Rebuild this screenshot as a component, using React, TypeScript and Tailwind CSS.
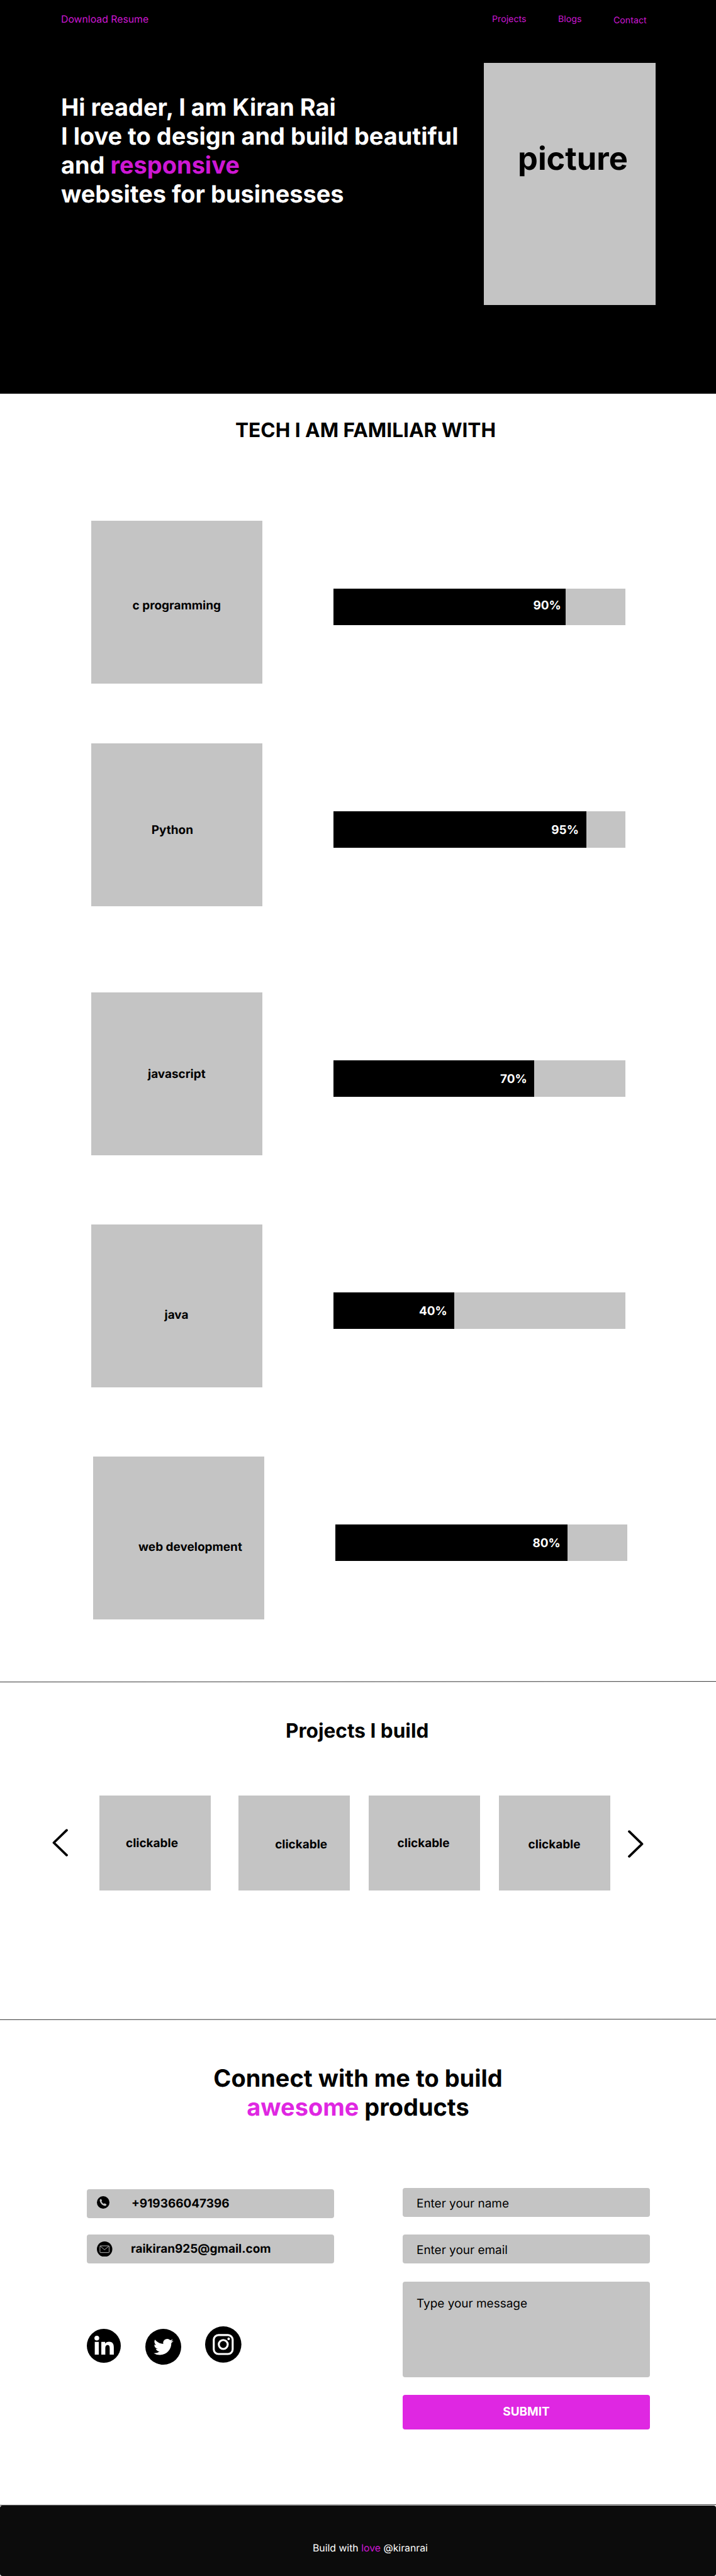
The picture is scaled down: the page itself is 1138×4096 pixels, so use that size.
import React from "react";

const tech = [
  { name: "c programming", row: "mt-0", label: "pl-[65.6px] pt-[123.2px]", value: 90, fill: "w-[369px]", pct: "pr-[7.2px] pt-[14.6px]" },
  { name: "Python", row: "mt-[95px]", label: "pl-[95.8px] pt-[126px]", value: 95, fill: "w-[402px]", pct: "pr-[12px] pt-[17.6px]" },
  { name: "javascript", row: "mt-[137px]", label: "pl-[90px] pt-[118px]", value: 70, fill: "w-[319px]", pct: "pr-[11.2px] pt-[17.6px]" },
  { name: "java", row: "mt-[110px]", label: "pl-[116.5px] pt-[132.4px]", value: 40, fill: "w-[192px]", pct: "pr-[11.2px] pt-[17.6px]" },
  { name: "web development", row: "mt-[110px] ml-[3px]", label: "pl-[72px] pt-[132px]", value: 80, fill: "w-[369px]", pct: "pr-[11.2px] pt-[17.6px]" },
];

const projects = [
  { card: "", label: "pl-[42.4px] pt-[64px]" },
  { card: "ml-[44px]", label: "pl-[58.6px] pt-[66.6px]" },
  { card: "ml-[30px]", label: "pl-[46px] pt-[64px]" },
  { card: "ml-[30px]", label: "pl-[47px] pt-[66.6px]" },
];

function Divider() {
  return (
    <svg className="block h-[2px] w-full" viewBox="0 0 1138 2" preserveAspectRatio="none">
      <line x1="0" y1="1.4" x2="1138" y2="0.6" stroke="black" strokeWidth="0.8" />
    </svg>
  );
}

function Chevron({ right = false }: { right?: boolean }) {
  return (
    <svg className="h-[44px] w-[25px] shrink-0" viewBox="0 0 25 44" fill="none" stroke="black" strokeWidth="3.8" strokeLinecap="round" strokeLinejoin="round">
      <path d={right ? "M2 2.2 22.5 22 2 41.8" : "M23 2.2 2.5 22 23 41.8"} />
    </svg>
  );
}

function LinkedIn() {
  return (
    <svg className="mt-[4px] size-[54px]" viewBox="0 0 68 68">
      <circle cx="34" cy="34" r="34" />
      <g fill="white">
        <circle cx="20" cy="18.6" r="4.800" />
        <path d="M15.900 26.200h8V51.500h-8zM29 26.200h7.600v3.500c1.500-2.500 4.500-4 8-4 7.500 0 9.400 5 9.400 11.500V51.500h-8.200V39.300c0-3.500-.4-6.900-4.200-6.900s-4.600 3.500-4.600 6.900V51.500h-8z" />
      </g>
    </svg>
  );
}

function Twitter() {
  return (
    <svg className="ml-[39px] mt-[4px] size-[57px]" viewBox="0 0 72 72">
      <circle cx="36" cy="36" r="36" />
      <path
        transform="translate(16.600 16.600) scale(1.650)"
        fill="white"
        d="M23.953 4.570a10 10 0 01-2.825.775 4.958 4.958 0 002.163-2.723c-.951.555-2.005.959-3.127 1.184a4.920 4.920 0 00-8.384 4.482C7.690 8.095 4.067 6.130 1.640 3.162a4.822 4.822 0 00-.666 2.475c0 1.710.870 3.213 2.188 4.096a4.904 4.904 0 01-2.228-.616v.060a4.923 4.923 0 003.946 4.827 4.996 4.996 0 01-2.212.085 4.936 4.936 0 004.604 3.417 9.867 9.867 0 01-6.102 2.105c-.390 0-.779-.023-1.170-.067a13.995 13.995 0 007.557 2.209c9.053 0 13.998-7.496 13.998-13.985 0-.210 0-.420-.015-.630A9.935 9.935 0 0024 4.590z"
      />
    </svg>
  );
}

function Instagram() {
  return (
    <svg className="ml-[38.4px] size-[57.7px]" viewBox="0 0 73 73">
      <circle cx="36.500" cy="36.500" r="36.500" />
      <g fill="none" stroke="white" strokeWidth="4">
        <rect x="17.400" y="17.500" width="38" height="38.200" rx="9.500" />
        <circle cx="36.500" cy="36.500" r="9" />
      </g>
      <circle cx="47.400" cy="25.200" r="2.600" fill="white" />
    </svg>
  );
}

function Phone() {
  return (
    <svg className="mt-[11px] size-[20px]" viewBox="0 0 25 25">
      <circle cx="12.500" cy="12.500" r="12.500" />
      <path
        transform="translate(-0.800 -1.100) scale(1.090)"
        d="M6.300 7.300c1.200-1.600 2.200-1.300 2.600-.6l1 2.200c.2.600-.1 1.100-.8 1.900.7 1.700 2.200 3.300 4 4.200.8-.8 1.300-1.100 1.900-.8l2.800 1.500c.8.500.5 1.500-.6 2.500-1.100.9-2.600.8-4.600-.2-3-1.500-5.200-3.900-6.200-6.900-.5-1.700-.6-2.900-.1-3.800z"
        fill="#c4c4c4"
      />
    </svg>
  );
}

function Mail() {
  return (
    <svg className="mt-[10.500px] size-[24.500px]" viewBox="0 0 31 31">
      <circle cx="15.500" cy="15.500" r="15.500" />
      <g fill="none" stroke="#c4c4c4" strokeWidth="1.200" strokeLinejoin="round">
        <rect x="6.200" y="8.900" width="18.400" height="13.500" rx="0.800" />
        <path d="M6.800 9.500l8.600 7.300 8.600-7.300" />
      </g>
    </svg>
  );
}

export default function App() {
  return (
    <div className="flex h-[4096px] w-[1138px] flex-col overflow-hidden bg-white font-['Inter',sans-serif] text-black [font-optical-sizing:none] [text-rendering:geometricPrecision]">
      <header className="h-[626px] shrink-0 bg-black">
        <nav className="flex h-[100px] pl-[97px] text-[#ce17d4]">
          <a className="w-[685px] pt-[21px] text-[15.800px] leading-[19px]">Download Resume</a>
          <a className="w-[105px] pt-[22px] text-[14.200px] leading-[18px]">Projects</a>
          <a className="w-[88px] pt-[22px] text-[14.200px] leading-[18px]">Blogs</a>
          <a className="pt-[23.500px] text-[14.200px] leading-[18px]">Contact</a>
        </nav>
        <div className="flex pl-[97px]">
          <h1 className="w-[672px] pt-[49px] text-[37.930px] font-bold leading-[45.900px] text-white">
            Hi reader, I am Kiran Rai
            <br />
            I love to design and build beautiful
            <br />
            and <span className="text-[#ce17d4]">responsive</span>
            <br />
            websites for businesses
          </h1>
          <div className="h-[385px] w-[273px] bg-[#c4c4c4] pl-[54px] pt-[122px] text-[50.580px] font-bold leading-[61px]">picture</div>
        </div>
      </header>

      <section className="flex h-[2047px] shrink-0 flex-col">
        <h2 className="pl-[374px] pt-[39px] text-[31.600px] font-bold leading-[38px]">TECH I AM FAMILIAR WITH</h2>
        <div className="mt-[125px] pl-[145px]">
          {tech.map((t) => (
            <div key={t.name} className={`flex ${t.row}`}>
              <div className={`h-[259px] w-[272px] bg-[#c4c4c4] text-[18.970px] font-bold leading-[23px] ${t.label}`}>{t.name}</div>
              <div className="ml-[113px] mt-[108px] h-[58px] w-[464px] bg-[#c4c4c4]">
                <div className={`h-full bg-black text-right text-[18.970px] font-bold leading-[23px] text-white ${t.fill} ${t.pct}`}>{t.value}%</div>
              </div>
            </div>
          ))}
        </div>
      </section>

      <section className="h-[537px] shrink-0">
        <Divider />
        <h2 className="pl-[454px] pt-[57.500px] text-[31.600px] font-bold leading-[38px]">Projects I build</h2>
        <div className="mt-[84px] flex pl-[83px]">
          <div className="mt-[53.500px]"><Chevron /></div>
          <div className="ml-[49.600px] flex">
            {projects.map((p, i) => (
              <div key={i} className={`h-[151.700px] w-[177px] bg-[#c4c4c4] text-[18.970px] font-bold leading-[23px] ${p.card} ${p.label}`}>clickable</div>
            ))}
          </div>
          <div className="ml-[28.400px] mt-[55.500px]"><Chevron right /></div>
        </div>
      </section>

      <section className="h-[772px] shrink-0">
        <Divider />
        <h2 className="pt-[71px] text-center text-[37.930px] font-bold leading-[45.900px]">
          Connect with me to build
          <br />
          <span className="text-[#df27e2]">awesome</span> products
        </h2>
        <div className="mt-[104.200px] flex pl-[138px]">
          <div className="w-[393px]">
            <div className="mt-[1.500px] flex h-[46px] rounded-[4px] bg-[#c4c4c4] pl-[16px] text-[18.970px] font-bold leading-[23px]">
              <div className="w-[55px]"><Phone /></div>
              <span className="pt-[11px]">+919366047396</span>
            </div>
            <div className="mt-[26.500px] flex h-[46px] rounded-[4px] bg-[#c4c4c4] pl-[16px] text-[18.970px] font-bold leading-[23px]">
              <div className="w-[54px]"><Mail /></div>
              <span className="pt-[11px]">raikiran925@gmail.com</span>
            </div>
            <div className="mt-[100px] flex">
              <LinkedIn />
              <Twitter />
              <Instagram />
            </div>
          </div>
          <form className="ml-[109px] w-[393px] text-[18.970px] leading-[23px]">
            <div className="h-[46px] rounded-[4px] bg-[#c4c4c4] pl-[22px] pt-[12.600px]">Enter your name</div>
            <div className="mt-[28.200px] h-[46px] rounded-[4px] bg-[#c4c4c4] pl-[22px] pt-[12.600px]">Enter your email</div>
            <div className="mt-[28.400px] h-[152px] rounded-[4px] bg-[#c4c4c4] pl-[22px] pt-[23.300px]">Type your message</div>
            <button type="button" className="mt-[28px] block h-[55.400px] w-full rounded-[4px] bg-[#df27e2] pb-[1px] text-center font-bold text-white">SUBMIT</button>
          </form>
        </div>
      </section>

      <footer className="flex grow flex-col">
        <Divider />
        <div className="grow rounded-[4px] bg-[#0c0c0c] pl-[497px] pt-[57.500px] text-[15.800px] leading-[19px] text-white">
          Build with <span className="text-[#ce17d4]">love</span> @kiranrai
        </div>
      </footer>
    </div>
  );
}
